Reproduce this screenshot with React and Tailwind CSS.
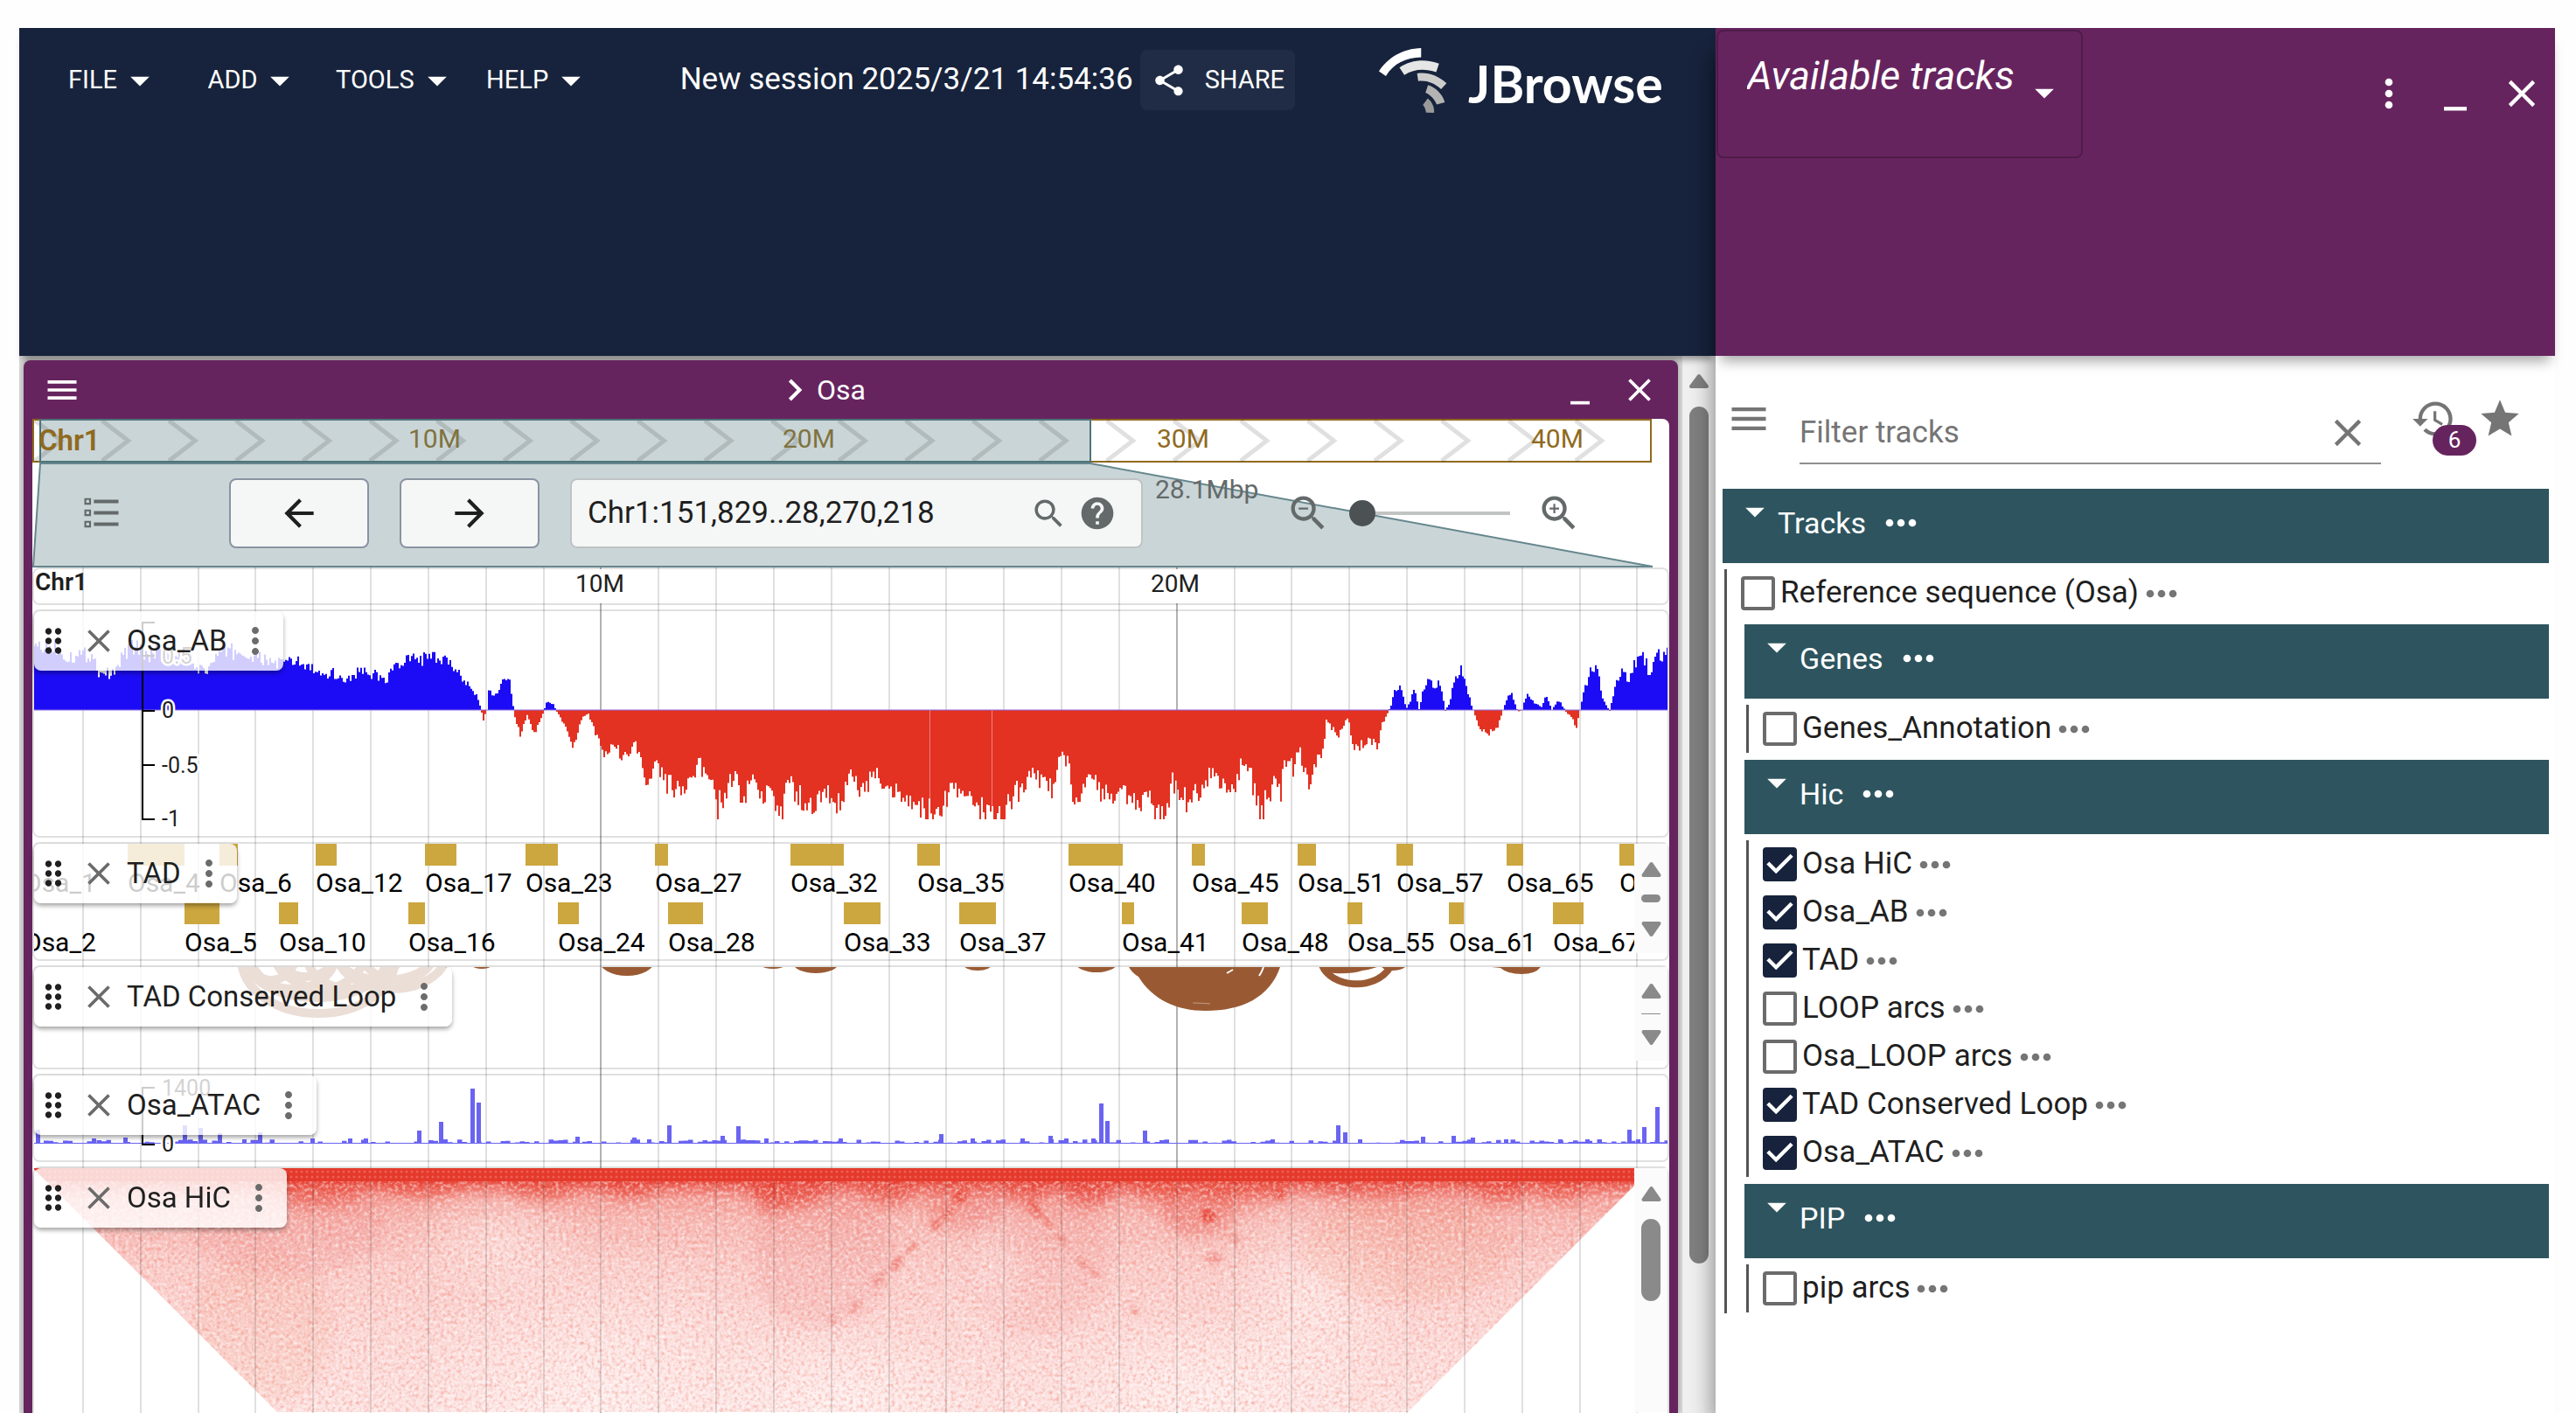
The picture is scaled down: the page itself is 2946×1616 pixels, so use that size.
import { useState } from "react";
import {
  MdArrowBack,
  MdArrowDropDown,
  MdArrowForward,
  MdClose,
  MdDragIndicator,
  MdHelp,
  MdHistory,
  MdKeyboardArrowRight,
  MdMenu,
  MdMinimize,
  MdMoreHoriz,
  MdMoreVert,
  MdSearch,
  MdShare,
  MdStar,
  MdZoomIn,
  MdZoomOut,
} from "react-icons/md";

const MENUS = ["File", "Add", "Tools", "Help"];

const TREE = [
  { name: "Genes", tracks: ["Genes_Annotation"] },
  {
    name: "Hic",
    tracks: ["Osa HiC", "Osa_AB", "TAD", "LOOP arcs", "Osa_LOOP arcs", "TAD Conserved Loop", "Osa_ATAC"],
  },
  { name: "PIP", tracks: ["pip arcs"] },
];

const OPEN_TRACKS = ["Osa HiC", "Osa_AB", "TAD", "TAD Conserved Loop", "Osa_ATAC"];

// [x, y] outline of the A/B compartment signal, zero line at 812
const AB = [
  [38, 737], [62, 737], [75, 750], [95, 748], [105, 747], [112, 768], [130, 770], [140, 747], [152, 738],
  [165, 748], [180, 745], [205, 752], [235, 768], [245, 752], [260, 742], [290, 752], [320, 758], [340, 756],
  [350, 762], [360, 766], [370, 776], [380, 769], [395, 778], [410, 766], [430, 772], [440, 778], [450, 762],
  [470, 753], [490, 752], [505, 755], [520, 764], [535, 782], [545, 796], [549, 811], [552, 823], [556, 812],
  [558, 790], [565, 798], [572, 780], [578, 773], [582, 776], [586, 808], [588, 820], [594, 840], [602, 818],
  [610, 840], [620, 817], [624, 803], [632, 806], [636, 814], [645, 830], [655, 853], [665, 820], [672, 817],
  [678, 832], [690, 866], [700, 848], [712, 868], [725, 852], [735, 874], [738, 896], [750, 872], [760, 895],
  [780, 913], [790, 900], [796, 872], [810, 890], [820, 925], [832, 905], [840, 880], [848, 922], [860, 888],
  [870, 920], [877, 898], [885, 930], [893, 930], [903, 886], [910, 912], [922, 918], [929, 934], [940, 905],
  [950, 912], [960, 922], [970, 886], [985, 906], [1000, 882], [1008, 912], [1025, 904], [1040, 914],
  [1052, 928], [1070, 927], [1085, 908], [1110, 903], [1120, 927], [1132, 936], [1148, 936], [1155, 920],
  [1170, 895], [1180, 890], [1198, 896], [1205, 905], [1212, 860], [1220, 873], [1228, 920], [1234, 922],
  [1245, 890], [1260, 912], [1280, 903], [1290, 910], [1300, 920], [1312, 918], [1320, 936], [1330, 934],
  [1340, 895], [1350, 915], [1360, 920], [1375, 900], [1385, 882], [1395, 895], [1410, 908], [1420, 870],
  [1428, 880], [1434, 912], [1441, 930], [1450, 915], [1456, 884], [1463, 915], [1468, 868], [1478, 880],
  [1485, 856], [1495, 905], [1505, 872], [1513, 858], [1516, 825], [1522, 833], [1530, 842], [1541, 820],
  [1547, 862], [1555, 852], [1566, 848], [1575, 855], [1580, 828], [1586, 816], [1590, 806], [1594, 788],
  [1602, 786], [1607, 811], [1612, 803], [1617, 786], [1622, 811], [1628, 784], [1633, 775], [1640, 785],
  [1647, 780], [1652, 813], [1657, 803], [1662, 778], [1670, 766], [1676, 785], [1682, 806], [1686, 818],
  [1692, 835], [1702, 838], [1712, 832], [1717, 815], [1722, 800], [1727, 792], [1735, 814], [1740, 812],
  [1745, 793], [1754, 804], [1762, 808], [1767, 796], [1774, 812], [1781, 799], [1790, 814], [1796, 820],
  [1802, 832], [1806, 812], [1810, 790], [1818, 768], [1826, 766], [1832, 800], [1840, 813], [1846, 785],
  [1855, 763], [1861, 778], [1868, 757], [1880, 752], [1885, 770], [1893, 748], [1901, 750], [1909, 742],
];

const TADS_TOP = [
  [27, 0, "Osa_1"], [146, 65, "Osa_4"], [251, 21, "Osa_6"], [361, 24, "Osa_12"], [486, 36, "Osa_17"],
  [601, 37, "Osa_23"], [749, 15, "Osa_27"], [904, 61, "Osa_32"], [1049, 26, "Osa_35"], [1222, 62, "Osa_40"],
  [1363, 15, "Osa_45"], [1484, 21, "Osa_51"], [1597, 19, "Osa_57"], [1723, 19, "Osa_65"], [1852, 19, "Osa_70"],
];

const TADS_BOTTOM = [
  [27, 0, "Osa_2"], [211, 40, "Osa_5"], [319, 22, "Osa_10"], [467, 19, "Osa_16"], [638, 24, "Osa_24"],
  [764, 40, "Osa_28"], [965, 42, "Osa_33"], [1097, 42, "Osa_37"], [1283, 14, "Osa_41"], [1420, 30, "Osa_48"],
  [1541, 17, "Osa_55"], [1657, 17, "Osa_61"], [1776, 35, "Osa_67"],
];

// [x, height] of the tall ATAC bins
const ATAC_PEAKS = [
  [43, 16], [107, 6], [143, 7], [211, 21], [229, 18], [251, 12], [279, 5], [297, 13], [357, 6], [400, 6],
  [418, 6], [479, 15], [504, 25], [540, 63], [547, 47], [660, 8], [725, 7], [742, 5], [765, 21], [826, 9],
  [844, 20], [876, 6], [961, 6], [1076, 11], [1112, 6], [1169, 6], [1201, 9], [1219, 6], [1250, 6],
  [1259, 46], [1266, 26], [1309, 15], [1455, 5], [1530, 21], [1538, 13], [1555, 5], [1627, 8], [1662, 9],
  [1684, 7], [1722, 5], [1784, 5], [1815, 5], [1863, 16], [1873, 5], [1880, 19], [1895, 42],
];

const rand = (n) => {
  const v = Math.sin(n * 12.9898) * 43758.5453;
  return v - Math.floor(v);
};

function abPaths() {
  let blue = "";
  let red = "";
  let seg = 0;
  for (let x = 38; x < 1908; x += 2) {
    while (seg < AB.length - 2 && AB[seg + 1][0] <= x) seg++;
    const [x0, y0] = AB[seg];
    const [x1, y1] = AB[seg + 1];
    const base = y0 + ((y1 - y0) * (x - x0)) / (x1 - x0);
    const d = (base - 812) * (1 + (rand(x) - 0.55) * 0.3);
    const y = Math.min(812 + d, 937);
    const bar = `M${x} 812V${y.toFixed(1)}h2V812z`;
    if (d < 0) blue += bar;
    else red += bar;
  }
  return { blue, red };
}

function atacPath() {
  let d = "";
  for (let i = 0; i < 340; i++) {
    const h = rand(i + 7) > 0.45 ? 1 + rand(i * 3) * 4 : 1;
    d += `M${39 + i * 5.5} 1309v${(-h).toFixed(1)}h5.5V1309z`;
  }
  ATAC_PEAKS.forEach(([x, h]) => {
    d += `M${x - 2} 1309v${-h}h5V1309z`;
  });
  return d;
}

const AB_PATHS = abPaths();
const ATAC_PATH = atacPath();
const GRID = Array.from({ length: 28 }, (_, i) => Math.round(94 + i * 65.83));
const CHEVRONS = Array.from({ length: 25 }, (_, i) => 39 + i * 76.6);

function IconButton({ label, className = "", children }) {
  return (
    <button type="button" aria-label={label} className={`shrink-0 ${className}`}>
      {children}
    </button>
  );
}

function Logo() {
  return (
    <div className="flex items-center gap-6 text-white">
      <svg viewBox="58 46 236 228" className="w-[78px] h-[76px]" aria-hidden="true">
        <path fill="#fff" d="M58 128C90 80 140 50 204 48V80C150 82 110 100 82 145Z" />
        <path fill="#e6e6e6" d="M129 115C170 88 220 84 266 102L256 131C215 118 180 120 146 141Z" />
        <path fill="#ccc" d="M190 136C225 130 262 142 292 170L273 190C250 168 222 158 194 162Z" />
        <path fill="#b3b3b3" d="M228 176C255 185 278 207 286 236L258 243C250 225 238 210 219 202Z" />
        <path fill="#999" d="M227 222C242 235 250 250 249 272L221 271C219 258 215 250 210 245Z" />
      </svg>
      <span className="pt-2 text-[59px] leading-[60px] font-bold font-[Lato,sans-serif]">JBrowse</span>
    </div>
  );
}

function AppBar() {
  return (
    <header className="relative h-[375px] shrink-0 pt-[25px] bg-[#17233c] text-white shadow-[0_8px_8px_-4px_rgba(0,0,0,0.4)]">
      <div className="flex items-center h-[69px] pl-[30px]">
        <nav className="flex">
          {MENUS.map((name) => (
            <button
              key={name}
              type="button"
              className="flex items-center justify-center min-w-[160px] px-3 text-[29px] uppercase"
            >
              {name}
              <MdArrowDropDown size={52} />
            </button>
          ))}
        </nav>
        <span className="ml-20 text-[35px] whitespace-nowrap">New session 2025/3/21 14:54:36</span>
        <button
          type="button"
          className="flex items-center gap-5 ml-2 h-[69px] px-3 rounded-lg bg-[#202c45] text-[29px] uppercase"
        >
          <MdShare size={42} />
          Share
        </button>
        <div className="ml-24">
          <Logo />
        </div>
      </div>
    </header>
  );
}

function Overview() {
  return (
    <svg viewBox="37 479 1872 50" className="block w-full" fontFamily="Roboto, sans-serif" fontSize="30">
      <rect x="38" y="480" width="1850" height="48" fill="#fff" stroke="#8f6a1f" strokeWidth="2" />
      <rect x="46" y="480" width="1201" height="48" fill="#cad5d7" />
      <g fill="none" stroke="#000" strokeOpacity="0.12" strokeWidth="5">
        {CHEVRONS.filter((x) => x < 1840).map((x) => (
          <path key={x} d={`M${x + 1} 481L${x + 31} 504L${x + 1} 527`} />
        ))}
      </g>
      <rect x="46" y="480" width="1201" height="48" fill="none" stroke="#4f747a" strokeWidth="2" />
      <text x="44" y="515" fontSize="33" fontWeight="600" fill="#8f6a1f">Chr1</text>
      <text x="467" y="512" fill="#7f733f">10M</text>
      <text x="895" y="512" fill="#7f733f">20M</text>
      <text x="1323" y="512" fill="#8f6a1f">30M</text>
      <text x="1751" y="512" fill="#8f6a1f">40M</text>
    </svg>
  );
}

function Controls() {
  return (
    <div className="relative h-[120px]">
      <svg viewBox="37 529 1872 120" preserveAspectRatio="none" className="absolute inset-0 w-full h-full">
        <path d="M46 530H1247L1890 648H38Z" fill="#cad5d7" stroke="#66878e" strokeWidth="2" />
      </svg>
      <div className="relative flex items-center h-full pb-1 pl-[53px] text-[#646a6a]">
        <IconButton label="Open track selector">
          <svg viewBox="0 0 24 24" className="size-[52px]" fill="none" stroke="currentColor">
            <path strokeWidth="1" d="M3.5 4.5h2.500v2.500h-2.500zM3.500 10.500h2.500v2.500h-2.500zM3.500 16.500h2.500v2.500h-2.500z" />
            <path strokeWidth="1.8" d="M8 5.8h13M8 11.8h13M8 17.8h13" />
          </svg>
        </IconButton>
        <button
          type="button"
          aria-label="Pan left"
          className="flex items-center justify-center w-40 h-20 ml-[120px] rounded-lg border-2 border-[#8b93a2] bg-[#f5f7f7] text-[#1f1f1f]"
        >
          <MdArrowBack size={50} />
        </button>
        <button
          type="button"
          aria-label="Pan right"
          className="flex items-center justify-center w-40 h-20 ml-[35px] rounded-lg border-2 border-[#8b93a2] bg-[#f5f7f7] text-[#1f1f1f]"
        >
          <MdArrowForward size={50} />
        </button>
        <div className="flex items-center w-[655px] h-20 ml-[35px] pl-[18px] pr-7 gap-3 rounded-lg border-2 border-[#bfc3c4] bg-[#f5f7f7]">
          <input
            aria-label="Location"
            defaultValue="Chr1:151,829..28,270,218"
            className="flex-1 min-w-0 bg-transparent text-[35px] text-[#1f1f1f] outline-none"
          />
          <MdSearch size={43} />
          <MdHelp size={44} />
        </div>
        <span className="self-start w-[163px] pl-[14px] pt-2 text-[30px]">28.1Mbp</span>
        <IconButton label="Zoom out">
          <MdZoomOut size={52} />
        </IconButton>
        <input
          type="range"
          aria-label="Zoom"
          min="0"
          max="100"
          defaultValue="0"
          className="w-[184px] h-[30px] ml-[21px] mr-[30px] appearance-none bg-transparent [&::-webkit-slider-runnable-track]:h-1 [&::-webkit-slider-runnable-track]:bg-[#c2c4c4] [&::-webkit-slider-thumb]:appearance-none [&::-webkit-slider-thumb]:size-[30px] [&::-webkit-slider-thumb]:-mt-[13px] [&::-webkit-slider-thumb]:rounded-full [&::-webkit-slider-thumb]:bg-[#4c5153]"
        />
        <IconButton label="Zoom in">
          <MdZoomIn size={52} />
        </IconButton>
      </div>
    </div>
  );
}

function TrackLabel({ name }) {
  return (
    <div className="absolute top-0 left-0 flex items-center h-[68px] pr-2 rounded-lg bg-white/80 text-[33px] text-[#1f1f1f] shadow-[0_3px_5px_rgba(0,0,0,0.35)]">
      <MdDragIndicator size={44} />
      <IconButton label={`Close ${name}`} className="ml-2 mr-2.5 text-[#6b6b6b]">
        <MdClose size={44} />
      </IconButton>
      <span className="whitespace-nowrap">{name}</span>
      <IconButton label={`${name} menu`} className="ml-2 text-[#6b6b6b]">
        <MdMoreVert size={48} />
      </IconButton>
    </div>
  );
}

function Track({ name, className, children }) {
  return (
    <div className={`relative rounded-lg border-2 border-black/12 ${className}`}>
      {children}
      <TrackLabel name={name} />
    </div>
  );
}

// small scroll bar drawn in a track's right margin
function TrackScroll({ y, height, up, down, thumb, thumbHeight }) {
  return (
    <g fill="#8a8a8a" stroke="#8a8a8a" strokeWidth="4" strokeLinejoin="round">
      <rect x="1869" y={y} width="39" height={height} fill="#fbfbfb" stroke="none" />
      <path d={`M1888.5 ${up + 2}l9 13h-18z`} />
      {down && <path d={`M1888.5 ${down + 15}l9 -13h-18z`} />}
      <rect x="1877" y={thumb} width="22" height={thumbHeight} rx={Math.min(11, thumbHeight / 2)} stroke="none" />
    </g>
  );
}

function AbTrack() {
  return (
    <svg viewBox="39 699 1868 257" className="block w-full" fontFamily="Roboto, sans-serif" fontSize="25">
      <path d={AB_PATHS.blue} fill="#1b0cf5" />
      <path d={AB_PATHS.red} fill="#e33122" />
      <path d="M1063.5 812V926M1134.5 812V937" stroke="#fff" strokeOpacity="0.4" />
      <path d="M38 812H1908" stroke="#8d6ae0" strokeWidth="1" />
      <path d="M177 712H163V937H177M163 750H177M163 813H177M163 875H177" fill="none" stroke="#000" strokeWidth="2" />
      <g fill="#1f1f1f" stroke="#fff" strokeWidth="5" paintOrder="stroke">
        <text x="185" y="759">0.5</text>
        <text x="185" y="821">0</text>
        <text x="185" y="884">-0.5</text>
        <text x="185" y="945">-1</text>
      </g>
    </svg>
  );
}

function TadTrack() {
  return (
    <svg viewBox="39 965 1868 132" className="block w-full" fontFamily="Roboto, sans-serif" fontSize="30">
      {TADS_TOP.map(([x, w, name]) => (
        <g key={name}>
          <rect x={x} y="965" width={w} height="25" fill="#cca63f" />
          <text x={x} y="1020">{name}</text>
        </g>
      ))}
      {TADS_BOTTOM.map(([x, w, name]) => (
        <g key={name}>
          <rect x={x} y="1032" width={w} height="25" fill="#cca63f" />
          <text x={x} y="1088">{name}</text>
        </g>
      ))}
      <TrackScroll y={965} height={125} up={986} down={1054} thumb={1023} thumbHeight={9} />
    </svg>
  );
}

function LoopTrack() {
  return (
    <svg viewBox="39 1107 1868 115" className="block w-full">
      <g fill="none" stroke="#995a33" strokeWidth="10">
        <ellipse cx="364" cy="1098" rx="88" ry="62" />
        <ellipse cx="362" cy="1098" rx="80" ry="44" />
        <ellipse cx="350" cy="1094" rx="66" ry="42" />
        <ellipse cx="335" cy="1094" rx="48" ry="38" />
        <ellipse cx="385" cy="1094" rx="70" ry="40" />
        <ellipse cx="400" cy="1090" rx="50" ry="42" />
        <ellipse cx="448" cy="1092" rx="62" ry="40" />
        <ellipse cx="440" cy="1092" rx="56" ry="30" />
        <ellipse cx="455" cy="1092" rx="40" ry="30" />
        <ellipse cx="350" cy="1090" rx="34" ry="28" />
        <ellipse cx="310" cy="1092" rx="28" ry="30" />
      </g>
      <g fill="#995a33">
        <ellipse cx="551" cy="1106" rx="10" ry="3" />
        <ellipse cx="717" cy="1099" rx="32" ry="18" />
        <ellipse cx="884" cy="1106" rx="12" ry="3" />
        <ellipse cx="933" cy="1101" rx="27" ry="13" />
        <ellipse cx="1118" cy="1103" rx="17" ry="8" />
        <ellipse cx="1254" cy="1102" rx="24" ry="11" />
        <path d="M1291 1107Q1295 1114 1302 1118C1318 1144 1345 1157 1379 1157C1420 1157 1452 1142 1464 1107Z" />
        <path d="M1509 1107H1575Q1566 1110 1558 1111Q1546 1115 1526 1114L1515 1112Z" />
        <path d="M1580 1107H1607Q1602 1111 1592 1111Q1584 1111 1580 1107Z" />
        <path d="M1706 1107H1762Q1756 1115 1740 1115Q1724 1115 1716 1108Z" />
      </g>
      <path d="M1512 1105C1522 1130 1572 1136 1590 1107" fill="none" stroke="#995a33" strokeWidth="8" />
      <path d="M1403 1114L1410 1110M1445 1107Q1443 1113 1440 1117" stroke="#fff" strokeWidth="2" fill="none" />
      <path d="M1364 1148Q1374 1148 1384 1149" stroke="#fff" strokeOpacity="0.4" fill="none" />
      <TrackScroll y={1107} height={107} up={1126} down={1179} thumb={1160} thumbHeight={1} />
    </svg>
  );
}

function AtacTrack() {
  return (
    <svg viewBox="39 1231 1868 97" className="block w-full" fontFamily="Roboto, sans-serif" fontSize="25">
      <path d={ATAC_PATH} fill="#6a64f2" />
      <path d="M177 1245H163V1310H177" fill="none" stroke="#000" strokeWidth="2" />
      <g fill="#1f1f1f" stroke="#fff" strokeWidth="5" paintOrder="stroke">
        <text x="185" y="1254">1400</text>
        <text x="185" y="1318">0</text>
      </g>
    </svg>
  );
}

// [cx, cy, rx, ry, rotation, opacity], point contacts away from the diagonal
const CONTACTS = [
  [1098, 1370, 9, 7, -50, 0.7], [1084, 1388, 11, 4, -50, 0.4], [1070, 1402, 7, 5, -50, 0.5],
  [1042, 1428, 9, 4, -50, 0.35], [1025, 1446, 10, 5, -50, 0.45], [1005, 1464, 10, 5, -50, 0.3],
  [978, 1496, 9, 5, -50, 0.25], [953, 1510, 6, 4, -60, 0.3], [1183, 1384, 11, 6, 55, 0.5],
  [1197, 1398, 10, 4, 55, 0.35], [1214, 1418, 7, 4, 55, 0.35], [1238, 1446, 9, 4, 50, 0.35],
  [1252, 1456, 7, 4, 50, 0.35], [1298, 1500, 6, 4, 60, 0.35], [1382, 1391, 8, 8, 0, 0.85],
  [1388, 1440, 10, 7, 0, 0.3], [1412, 1418, 7, 6, 60, 0.25], [1464, 1366, 7, 7, 0, 0.6],
];

// same columns, the wide domains hanging from the diagonal
const DOMAINS = [
  [1370, 1382, 44, 34, 0, 0.3], [1175, 1360, 26, 16, 0, 0.5], [1245, 1362, 28, 18, 0, 0.6],
  [900, 1360, 44, 22, 0, 0.6], [880, 1372, 20, 20, 0, 0.3], [1015, 1362, 30, 18, 0, 0.5],
  [1325, 1360, 30, 16, 0, 0.4], [1420, 1362, 50, 14, 0, 0.4], [1560, 1360, 60, 12, 0, 0.3],
  [1715, 1362, 30, 16, 0, 0.5], [1785, 1360, 26, 16, 0, 0.4], [720, 1358, 28, 15, 0, 0.5],
  [620, 1360, 34, 16, 0, 0.4], [480, 1358, 40, 12, 0, 0.4], [365, 1362, 50, 20, 0, 0.4],
  [1100, 1375, 44, 34, 0, 0.2], [330, 1400, 110, 60, 0, 0.1], [300, 1520, 80, 90, 0, 0.07],
  [940, 1440, 80, 80, 0, 0.1], [1610, 1430, 120, 60, 0, 0.08], [1180, 1440, 90, 90, 0, 0.06],
];

function Blobs({ items, filter }) {
  return (
    <g fill="#e5392b" filter={filter}>
      {items.map(([cx, cy, rx, ry, angle, opacity]) => (
        <ellipse
          key={`${cx}-${cy}`}
          cx={cx}
          cy={cy}
          rx={rx}
          ry={ry}
          opacity={opacity}
          transform={`rotate(${angle} ${cx} ${cy})`}
        />
      ))}
    </g>
  );
}

function HicTrack() {
  return (
    <svg viewBox="39 1337 1868 279" className="block w-full">
      <defs>
        <linearGradient id="hic-fade" x1="0" y1="0" x2="0" y2="1">
          <stop offset="0" stopColor="#e5392b" />
          <stop offset="0.045" stopColor="#e5392b" />
          <stop offset="0.08" stopColor="#ec6a60" />
          <stop offset="0.13" stopColor="#f3a19b" />
          <stop offset="0.22" stopColor="#f6b8b3" />
          <stop offset="0.4" stopColor="#f9ccc9" />
          <stop offset="0.7" stopColor="#fbdbd9" />
          <stop offset="1" stopColor="#fce5e4" />
        </linearGradient>
        <radialGradient id="hic-light">
          <stop offset="0" stopColor="#fff" stopOpacity="0.45" />
          <stop offset="1" stopColor="#fff" stopOpacity="0" />
        </radialGradient>
        <pattern id="hic-dots" width="6" height="6" patternUnits="userSpaceOnUse">
          <circle cx="3" cy="3" r="1.5" fill="#fff" fillOpacity="0.2" />
        </pattern>
        <filter id="hic-soft" x="-20%" y="-20%" width="140%" height="140%">
          <feGaussianBlur stdDeviation="7" />
        </filter>
        <filter id="hic-spot" x="-20%" y="-20%" width="140%" height="140%">
          <feGaussianBlur stdDeviation="2" />
        </filter>
        <filter id="hic-noise-red" x="0" y="0" width="100%" height="100%">
          <feTurbulence type="fractalNoise" baseFrequency="0.25" numOctaves="2" seed="4" />
          <feColorMatrix values="0 0 0 0 0.89  0 0 0 0 0.2  0 0 0 0 0.15  1.2 0 0 0 -0.52" />
        </filter>
        <filter id="hic-noise-white" x="0" y="0" width="100%" height="100%">
          <feTurbulence type="fractalNoise" baseFrequency="0.25" numOctaves="2" seed="11" />
          <feColorMatrix values="0 0 0 0 1  0 0 0 0 1  0 0 0 0 1  1.4 0 0 0 -0.6" />
        </filter>
        <clipPath id="hic-shape">
          <path d="M38 1337H1869V1357L1590 1636H337Z" />
        </clipPath>
      </defs>
      <g clipPath="url(#hic-shape)">
        <rect x="38" y="1337" width="1831" height="279" fill="url(#hic-fade)" />
        <g fill="url(#hic-light)">
          <ellipse cx="690" cy="1600" rx="220" ry="190" />
          <ellipse cx="570" cy="1420" rx="110" ry="70" />
          <ellipse cx="1130" cy="1450" rx="60" ry="90" />
          <ellipse cx="1500" cy="1480" rx="110" ry="130" />
          <ellipse cx="1380" cy="1590" rx="180" ry="90" />
          <ellipse cx="960" cy="1600" rx="160" ry="90" />
        </g>
        <Blobs items={DOMAINS} filter="url(#hic-soft)" />
        <Blobs items={CONTACTS} filter="url(#hic-spot)" />
        <rect x="38" y="1352" width="1831" height="264" filter="url(#hic-noise-red)" />
        <rect x="38" y="1352" width="1831" height="264" filter="url(#hic-noise-white)" />
        <rect x="38" y="1337" width="1831" height="15" fill="#e5392b" />
        <rect x="38" y="1337" width="1831" height="15" fill="url(#hic-dots)" />
        <g fill="#000" fillOpacity="0.12">
          {GRID.map((x) => (
            <rect key={x} x={x} y="1352" width="2" height="264" />
          ))}
        </g>
      </g>
      <TrackScroll y={1337} height={279} up={1358} thumb={1395} thumbHeight={94} />
    </svg>
  );
}

function Ruler() {
  return (
    <div className="h-[43px] rounded-lg border-2 border-black/12">
      <svg viewBox="39 651 1868 39" className="block w-full" fontFamily="Roboto, sans-serif" fontSize="28" fill="#1f1f1f">
        <rect x="655" y="651" width="62" height="39" fill="#fff" />
        <rect x="1312" y="651" width="62" height="39" fill="#fff" />
        <text x="40" y="675" fontWeight="600">Chr1</text>
        <text x="686" y="677" textAnchor="middle">10M</text>
        <text x="1344" y="677" textAnchor="middle">20M</text>
      </svg>
    </div>
  );
}

function LinearView() {
  return (
    <section className="relative z-10 flex-1 flex flex-col min-w-0 mt-[5px] mx-[5px] px-[10px] rounded-t-lg bg-[#66245f] shadow-[0_0_6px_rgba(0,0,0,0.3)]">
      <div className="flex items-center justify-between h-[67px] shrink-0 px-3 text-white">
        <IconButton label="View menu">
          <MdMenu size={44} />
        </IconButton>
        <h2 className="flex items-center pr-1 text-[32px]">
          <MdKeyboardArrowRight size={50} />
          Osa
        </h2>
        <div className="flex gap-6">
          <IconButton label="Minimize view">
            <MdMinimize size={44} />
          </IconButton>
          <IconButton label="Close view">
            <MdClose size={44} />
          </IconButton>
        </div>
      </div>
      <div className="flex-1 bg-white rounded-tr-lg">
        <Overview />
        <Controls />
        <div className="relative">
          <svg viewBox="37 649 1872 967" className="absolute top-0 left-0 w-full">
            {GRID.map((x, i) => (
              <rect key={x} x={x} y="649" width="2" height="967" fillOpacity={i === 9 || i === 19 ? 0.3 : 0.12} />
            ))}
          </svg>
          <div className="relative flex flex-col gap-[5px]">
            <Ruler />
            <Track name="Osa_AB" className="h-[261px]">
              <AbTrack />
            </Track>
            <Track name="TAD" className="h-[136px]">
              <TadTrack />
            </Track>
            <Track name="TAD Conserved Loop" className="h-[119px]">
              <LoopTrack />
            </Track>
            <Track name="Osa_ATAC" className="h-[101px]">
              <AtacTrack />
            </Track>
            <Track name="Osa HiC" className="h-[400px]">
              <HicTrack />
            </Track>
          </div>
        </div>
      </div>
    </section>
  );
}

function PageScroll() {
  return (
    <div className="flex flex-col items-center w-[38px] pt-5 bg-[#f0f0f0]">
      <svg viewBox="0 0 24 18" className="w-6" fill="#808080" stroke="#808080" strokeWidth="4" strokeLinejoin="round">
        <path d="M12 3l9 12H3z" />
      </svg>
      <div className="w-[22px] h-[980px] mt-5 rounded-full bg-[#808080]" />
    </div>
  );
}

function GroupBar({ name }) {
  return (
    <div className="flex items-start h-[85px] pl-[11px] bg-[#2e555f] text-white">
      <MdArrowDropDown size={52} />
      <div className="flex items-center gap-[14px] pt-[13px] text-[34px]">
        <h3>{name}</h3>
        <IconButton label={`${name} group menu`}>
          <MdMoreHoriz size={52} />
        </IconButton>
      </div>
    </div>
  );
}

function TrackRow({ name, checked, onToggle }) {
  const id = `track-${name.replace(/\W+/g, "-")}`;
  return (
    <li className="flex items-center h-[55px] pl-4">
      <span className="relative size-[39px] shrink-0">
        <input
          id={id}
          type="checkbox"
          checked={checked}
          onChange={onToggle}
          className="peer block size-[39px] appearance-none rounded-sm border-4 border-[#6b6b6b] checked:border-[#17233c] checked:bg-[#17233c]"
        />
        <svg
          viewBox="3 3 18 18"
          className="absolute inset-0 size-[39px] hidden peer-checked:block pointer-events-none"
          fill="#fff"
        >
          <path d="M10 17l-5-5 1.41-1.41L10 14.17l7.59-7.59L19 8l-9 9z" />
        </svg>
      </span>
      <label htmlFor={id} className="pl-[6px] text-[35px] whitespace-nowrap">
        {name}
      </label>
      <IconButton label={`${name} options`} className="text-[#757575]">
        <MdMoreHoriz size={52} />
      </IconButton>
    </li>
  );
}

function TrackDrawer() {
  const [open, setOpen] = useState(OPEN_TRACKS);
  const toggle = (name) =>
    setOpen((prev) => (prev.includes(name) ? prev.filter((t) => t !== name) : [...prev, name]));

  const row = (name) => (
    <TrackRow key={name} name={name} checked={open.includes(name)} onToggle={() => toggle(name)} />
  );

  return (
    <aside className="relative z-20 w-[960px] shrink-0 bg-white text-[#1f1f1f] shadow-[-14px_24px_24px_-10px_rgba(0,0,0,0.4)]">
      <div className="flex items-start justify-between h-[375px] pt-[2px] pl-px bg-[#66245f] text-white shadow-[0_12px_14px_-6px_rgba(0,0,0,0.35)]">
        <div className="relative">
          <select
            aria-label="Drawer widget"
            className="w-[419px] h-[147px] pl-[33px] pb-[42px] appearance-none rounded-lg border-2 border-[#4f1b49] bg-transparent text-[45px] italic"
          >
            <option>Available tracks</option>
          </select>
          <MdArrowDropDown size={52} className="absolute right-[18px] top-[46px] pointer-events-none" />
        </div>
        <div className="flex items-center gap-6 h-[145px] pr-3">
          <IconButton label="Widget menu">
            <MdMoreVert size={52} />
          </IconButton>
          <IconButton label="Minimize drawer">
            <MdMinimize size={52} />
          </IconButton>
          <IconButton label="Close drawer">
            <MdClose size={52} />
          </IconButton>
        </div>
      </div>
      <div className="flex items-start pt-[46px] pl-3 pr-[37px] text-[#757575]">
        <IconButton label="Track menu">
          <MdMenu size={52} />
        </IconButton>
        <div className="flex-1 flex items-center h-[70px] mt-2 ml-8 mr-[34px] pr-3 border-b-2 border-[#8f8f8f]">
          <input
            aria-label="Filter tracks"
            placeholder="Filter tracks"
            className="flex-1 min-w-0 text-[35px] outline-none placeholder:text-[#757575]"
          />
          <IconButton label="Clear filter">
            <MdClose size={52} />
          </IconButton>
        </div>
        <IconButton label="Recently used tracks" className="relative mr-6">
          <MdHistory size={52} />
          <span className="absolute left-[25px] top-[33px] w-[50px] h-[35px] rounded-full bg-[#66245f] text-white text-[26px] leading-[35px] text-center">
            6
          </span>
        </IconButton>
        <IconButton label="Favorite tracks">
          <MdStar size={52} />
        </IconButton>
      </div>
      <div className="mt-7 ml-2 mr-[7px]">
        <GroupBar name="Tracks" />
        <div className="mt-[7px] ml-[2px] border-l-[3px] border-[#555] pb-px">
          <ul>{row("Reference sequence (Osa)")}</ul>
          {TREE.map((group) => (
            <div key={group.name} className="mt-2 ml-5">
              <GroupBar name={group.name} />
              <ul className="mt-[7px] ml-[2px] border-l-[3px] border-[#555]">{group.tracks.map(row)}</ul>
            </div>
          ))}
        </div>
      </div>
    </aside>
  );
}

export default function App() {
  return (
    <div className="flex h-screen overflow-hidden pt-8 pl-[22px] pr-6 bg-[#fefefe] font-[Roboto,sans-serif]">
      <main className="flex-1 flex flex-col min-w-0 bg-[#d9d9d9]">
        <AppBar />
        <div className="flex flex-1 min-h-0">
          <LinearView />
          <PageScroll />
        </div>
      </main>
      <TrackDrawer />
    </div>
  );
}
